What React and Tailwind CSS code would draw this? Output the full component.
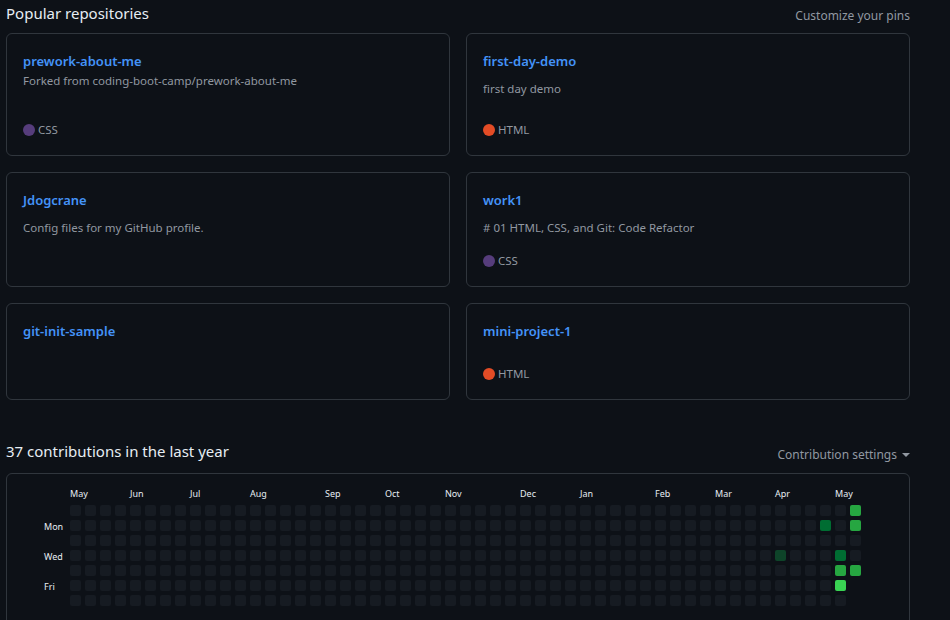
import React from 'react';

const repos = [
  { name: 'prework-about-me', fork: 'Forked from coding-boot-camp/prework-about-me', lang: 'CSS' },
  { name: 'first-day-demo', desc: 'first day demo', lang: 'HTML' },
  { name: 'Jdogcrane', desc: 'Config files for my GitHub profile.' },
  { name: 'work1', desc: '# 01 HTML, CSS, and Git: Code Refactor', lang: 'CSS' },
  { name: 'git-init-sample' },
  { name: 'mini-project-1', lang: 'HTML' },
];

const rowHeights = ['h-[123px]', 'h-[115px]', 'h-[97px]'];

const langColors = {
  CSS: 'bg-[#563d7c]',
  HTML: 'bg-[#e34c26]',
};

const months = [
  ['May', 0], ['Jun', 4], ['Jul', 8], ['Aug', 12], ['Sep', 17], ['Oct', 21], ['Nov', 25],
  ['Dec', 30], ['Jan', 34], ['Feb', 39], ['Mar', 43], ['Apr', 47], ['May', 51],
];

// week-day -> level
const levels = {
  '47-3': 1,
  '50-1': 2,
  '51-3': 2,
  '51-4': 3,
  '51-5': 4,
  '52-0': 3,
  '52-1': 3,
  '52-4': 3,
};

const levelColors = ['bg-[#161b22]', 'bg-[#0e4429]', 'bg-[#006d32]', 'bg-[#26a641]', 'bg-[#39d353]'];

const RepoCard = ({ repo, height }) => (
  <div className={`${height} border border-[#30363d] rounded-md px-4 pt-[17px] pb-4 flex flex-col`}>
    <a className="text-[13px] font-semibold text-[#4493f8] leading-5 cursor-pointer">{repo.name}</a>
    {repo.fork && <p className="text-[11.5px] text-[#9198a1] leading-4 mt-[2px]">{repo.fork}</p>}
    {repo.desc && <p className="text-[11.5px] text-[#9198a1] leading-[18px] mt-[9px]">{repo.desc}</p>}
    {repo.lang && (
      <div className="mt-auto flex items-center gap-[3px] text-[11.5px] text-[#9198a1] leading-[18px]">
        <span className={`w-3 h-3 rounded-full shrink-0 ${langColors[repo.lang]}`}></span>
        <span>{repo.lang}</span>
      </div>
    )}
  </div>
);

const App = () => {
  const cells = [];
  for (let w = 0; w < 53; w++) {
    const days = w === 52 ? 5 : 7;
    for (let d = 0; d < days; d++) {
      cells.push(
        <div
          key={`${w}-${d}`}
          className={`w-[11px] h-[11px] rounded-[2px] ${levelColors[levels[`${w}-${d}`] || 0]}`}
        ></div>
      );
    }
  }

  return (
    <div className="min-h-screen bg-[#0d1117] text-[#e6edf3] overflow-hidden" style={{ fontFamily: '"Segoe UI", "Noto Sans", "Open Sans", sans-serif' }}>
      <div className="ml-[6px] w-[904px]">
        {/* Popular repositories */}
        <div className="flex items-center justify-between h-[29px] pb-[2px]">
          <h2 className="text-[15px]">Popular repositories</h2>
          <span className="text-xs text-[#9198a1] cursor-pointer pt-1">Customize your pins</span>
        </div>
        <div className="mt-1 grid grid-cols-2 gap-4">
          {repos.map((repo, i) => (
            <RepoCard key={repo.name} repo={repo} height={rowHeights[Math.floor(i / 2)]} />
          ))}
        </div>

        {/* Contributions */}
        <div className="mt-[39px] flex items-center justify-between h-[25px]">
          <h2 className="text-[15px]">37 contributions in the last year</h2>
          <span className="text-xs text-[#9198a1] flex items-center gap-[5px] cursor-pointer pt-[7px]">
            Contribution settings
            <span className="w-0 h-0 border-x-[4px] border-x-transparent border-t-[4px] border-t-[#9198a1]"></span>
          </span>
        </div>
        <div className="mt-[9px] border border-[#30363d] rounded-md pl-[37px] pt-[13px] pb-[60px]">
          <div className="flex">
            <div className="w-[26px] pt-[17px] flex flex-col text-[9px] leading-[15px]">
              <span className="h-[15px]"></span>
              <span className="h-[15px]">Mon</span>
              <span className="h-[15px]"></span>
              <span className="h-[15px]">Wed</span>
              <span className="h-[15px]"></span>
              <span className="h-[15px]">Fri</span>
            </div>
            <div>
              <div className="grid grid-cols-[repeat(53,11px)] gap-x-[4px] h-[13px] text-[9px] leading-[13px]">
                {months.map(([m, col], i) => (
                  <span key={i} className="whitespace-nowrap" style={{ gridColumn: `${col + 1} / span 3` }}>
                    {m}
                  </span>
                ))}
              </div>
              <div className="mt-[5px] grid grid-flow-col grid-rows-[repeat(7,11px)] auto-cols-[11px] gap-[4px]">
                {cells}
              </div>
            </div>
          </div>
        </div>
      </div>
    </div>
  );
};

export default App;
